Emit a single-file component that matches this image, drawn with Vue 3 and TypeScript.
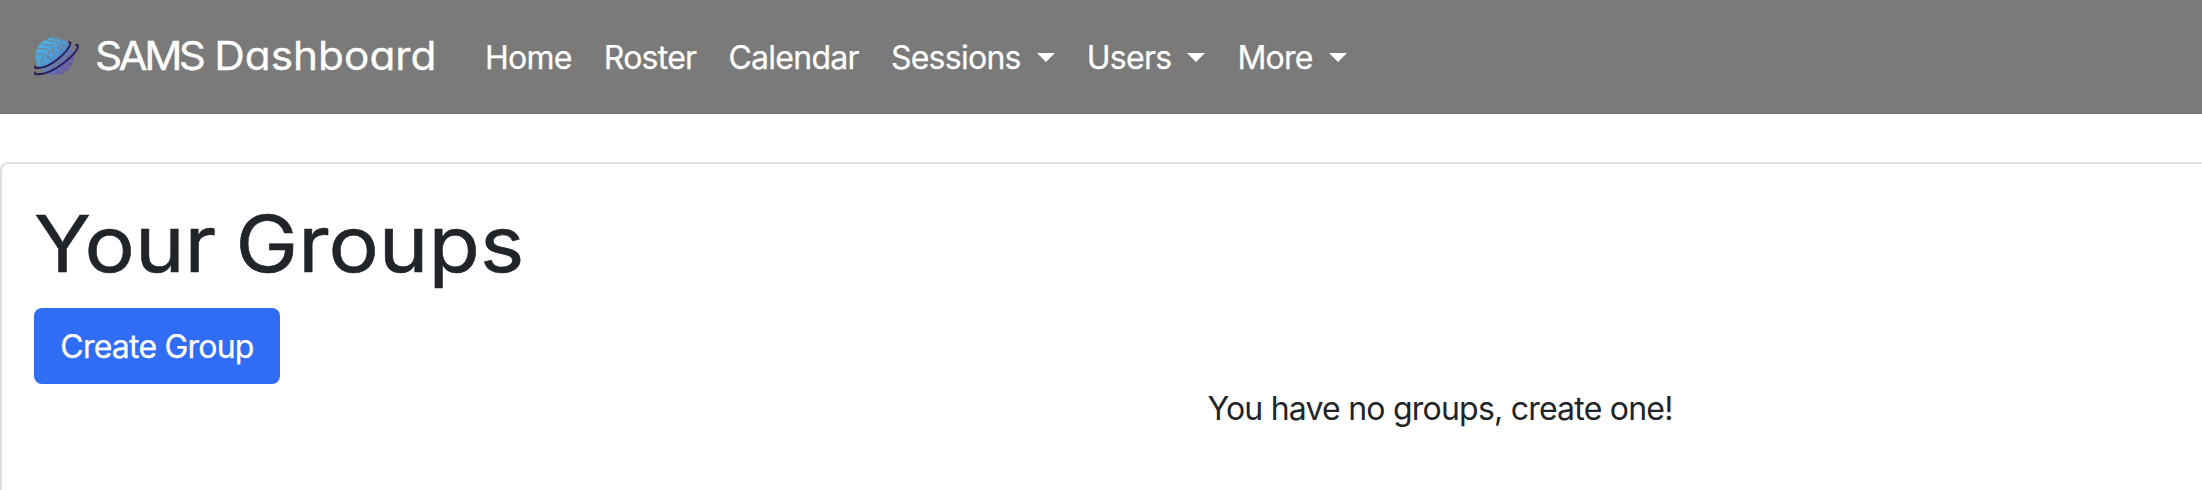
<script setup lang="ts">
interface NavItem {
  label: string
  dropdown: boolean
}

const navItems: NavItem[] = [
  { label: 'Home', dropdown: false },
  { label: 'Roster', dropdown: false },
  { label: 'Calendar', dropdown: false },
  { label: 'Sessions', dropdown: true },
  { label: 'Users', dropdown: true },
  { label: 'More', dropdown: true },
]

const groups: string[] = []
</script>

<template>
  <div class="page">
    <header class="navbar">
      <a class="brand">
        <svg class="logo" viewBox="0 0 46 40" aria-hidden="true">
          <defs>
            <linearGradient id="globe" x1="0.1" y1="0.2" x2="0.85" y2="0.9">
              <stop offset="0" stop-color="#4db4e8" />
              <stop offset="0.42" stop-color="#4c9bd8" />
              <stop offset="0.72" stop-color="#5e71b8" />
              <stop offset="1" stop-color="#6d4fa0" />
            </linearGradient>
            <clipPath id="disc"><circle cx="20.5" cy="19.5" r="19" /></clipPath>
          </defs>
          <circle cx="20.5" cy="19.5" r="19" fill="url(#globe)" />
          <g clip-path="url(#disc)" fill="none" stroke="#7a7a7a" stroke-width="1">
            <path d="M0 17h8q3 0 2 2l-3 5q-1 2 1 3h3" />
            <path d="M2 11l8 1q6 0 5 3l-2 4q-1 2 2 2l3 1" />
            <path d="M6 4q0 3 5 4l5 0q4 0 3 3l-1 3q0 2 4 3" />
            <path d="M12 0q-1 4 5 4l5 1q4 0 3 3l-1 3q0 2 4 2" />
            <path d="M18 0q0 2 5 2q6 0 5 3l-1 2q0 2 4 2" />
            <path d="M14 35q4-1 5 1t4 2h5" />
            <path d="M20 31q4-1 5 1t4 2h5" />
            <path d="M26 27q4-1 5 1t4 2h5" />
            <path d="M31 22q3-1 4 1t3 2h5" />
          </g>
          <g fill="none" stroke-linecap="round">
            <path d="M1.500 33.500Q12 35 26 24.500T39.500 7.500" stroke="#7a7a7a" stroke-width="1.200" />
            <path d="M1 29.500L1.500 31Q12 32 24 22T36.500 6L35 5" stroke="#301c58" stroke-width="2" />
            <path d="M1 35.500L1.500 37.300Q14 38 29 26.500T44 8.500L42 8" stroke="#301c58" stroke-width="2" />
          </g>
        </svg>
        <span class="brand-name"><span class="acronym">SAMS</span> Dashboard</span>
      </a>
      <nav class="links">
        <a v-for="item in navItems" :key="item.label" class="link">
          <span>{{ item.label }}</span>
          <i v-if="item.dropdown" class="caret" />
        </a>
      </nav>
    </header>

    <main class="card">
      <h1 class="title">Your Groups</h1>
      <button class="create" type="button">Create Group</button>
      <p v-if="groups.length === 0" class="empty">You have no groups, create one!</p>
    </main>
  </div>
</template>

<style>
body {
  margin: 0;
  overflow: hidden;
  background: #fff;
}
</style>

<style scoped>
.page {
  height: 490px;
  overflow: hidden;
  display: flex;
  flex-direction: column;
  gap: 48px;
  font-family: Inter, "Liberation Sans", sans-serif;
  font-size: 32px;
  font-weight: 400;
  line-height: 48px;
  letter-spacing: -0.78px;
  color: #212529;
}

.navbar {
  box-sizing: border-box;
  flex: none;
  height: 114px;
  padding: 0 34px;
  display: flex;
  align-items: center;
  background: #7a7a7a;
  color: #fff;
}

.brand {
  display: flex;
  align-items: center;
  width: 435px;
}

.logo {
  flex: none;
  width: 46px;
  height: 40px;
  margin-right: 15px;
}

.brand-name {
  font-size: 39px;
  line-height: 58px;
  padding-bottom: 2px;
  letter-spacing: 0;
  font-feature-settings: "cv11";
  white-space: nowrap;
  transform: scaleX(1.085);
  transform-origin: left;
  -webkit-text-stroke: 0.3px currentColor;
}

.acronym {
  letter-spacing: -3.3px;
}

.links {
  display: flex;
  padding-top: 2px;
  letter-spacing: -0.73px;
  -webkit-text-stroke: 0.25px currentColor;
}

.link {
  display: flex;
  align-items: center;
  padding: 0 16px;
  white-space: nowrap;
}

.caret {
  margin: 0 0 1px 16px;
  border-top: 9.600px solid #fff;
  border-left: 9.600px solid transparent;
  border-right: 9.600px solid transparent;
}

.card {
  box-sizing: border-box;
  flex: none;
  width: 2880px;
  height: 400px;
  padding: 32px;
  border: 2px solid #dfdfdf;
  border-radius: 8px;
}

.title {
  width: max-content;
  margin: 0 0 16px;
  font-size: 78px;
  font-weight: 400;
  line-height: 96px;
  letter-spacing: 0;
  word-spacing: -4px;
  font-feature-settings: "cv11";
  transform: scaleX(1.077);
  transform-origin: left;
  -webkit-text-stroke: 0.6px currentColor;
}

.create {
  display: block;
  box-sizing: border-box;
  width: 246px;
  height: 76px;
  padding: 2px 0 0;
  border: 0;
  border-radius: 8px;
  background: #316df4;
  color: #fff;
  font: inherit;
  letter-spacing: inherit;
  white-space: nowrap;
  -webkit-text-stroke: 0.25px currentColor;
}

.empty {
  margin: 0;
  padding-top: 1px;
  text-align: center;
}
</style>
